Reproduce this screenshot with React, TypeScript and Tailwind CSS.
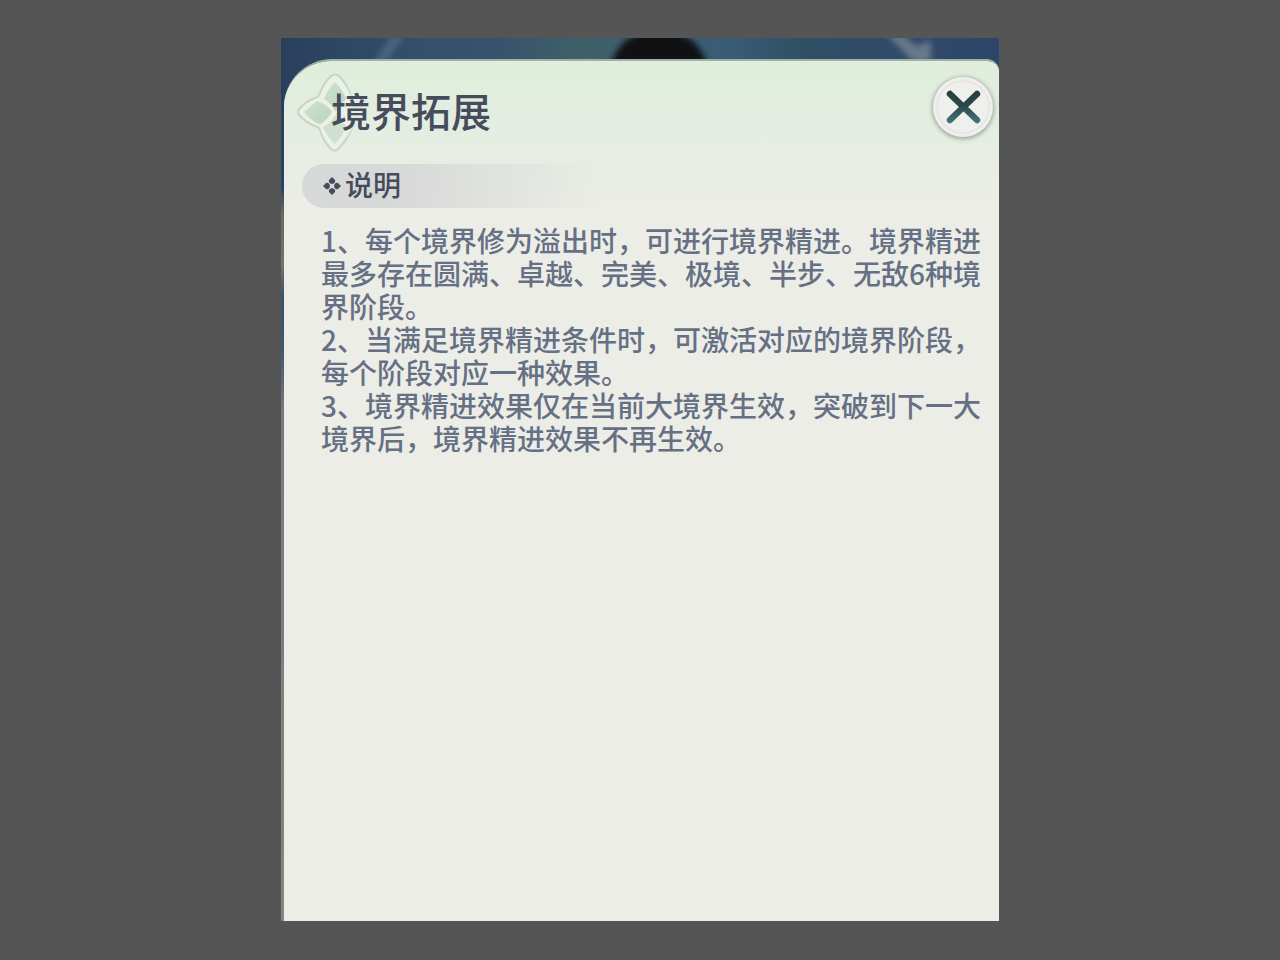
import { useState } from 'react'

const title = '境界拓展'

const rules = [
  '每个境界修为溢出时，可进行境界精进。境界精进最多存在圆满、卓越、完美、极境、半步、无敌6种境界阶段。',
  '当满足境界精进条件时，可激活对应的境界阶段，每个阶段对应一种效果。',
  '境界精进效果仅在当前大境界生效，突破到下一大境界后，境界精进效果不再生效。',
]

function TitleOrnament() {
  return (
    <svg viewBox="0 0 80 80" className="size-20 shrink-0" fill="none" aria-hidden="true">
      <defs>
        <linearGradient id="petal" x1="0" y1="0" x2="1" y2="1">
          <stop offset="0" stopColor="#cfe2cf" />
          <stop offset="1" stopColor="#b9d3be" />
        </linearGradient>
        <linearGradient id="fade" x1="0" y1="0" x2="1" y2="0">
          <stop offset="0.62" stopColor="#fff" />
          <stop offset="0.78" stopColor="#000" />
        </linearGradient>
        <mask id="left-side">
          <rect width="80" height="80" fill="url(#fade)" />
        </mask>
      </defs>
      <g mask="url(#left-side)">
        <path
          d="M2 39Q2 37 5 34Q11 28 19 25Q23 24 24 20Q27 11 35 3Q39 0 43 3Q51 11 55 22L62 40L55 58Q50 68 42 76Q39 79 35 76Q27 68 24 57Q23 54 19 53Q11 50 5 44Q2 41 2 39Z"
          fill="#ebf1e6"
          stroke="#c9d4c6"
          strokeWidth="2"
        />
        <path d="M39 9Q47 17 50 26L39 38Q35 30 28 26Q31 17 39 9Z" fill="url(#petal)" />
        <path d="M8 39L21 28Q30 30 36 39Q30 49 23 51Q14 47 8 39Z" fill="url(#petal)" />
        <path d="M27 54Q36 50 39 42L50 53Q47 63 39 71Q31 64 27 54Z" fill="#cfe0d0" />
      </g>
    </svg>
  )
}

function SectionMark() {
  return (
    <svg viewBox="0 0 18 18" className="size-[18px] shrink-0" fill="#454c5b" aria-hidden="true">
      <path d="M9 0L12 3Q13 6 9 7Q5 6 6 3Z" />
      <path d="M9 18L12 15Q13 12 9 11Q5 12 6 15Z" />
      <path d="M0 9L3 6Q6 5 7 9Q6 13 3 12Z" />
      <path d="M18 9L15 6Q12 5 11 9Q12 13 15 12Z" />
    </svg>
  )
}

function CloseButton({ onClick }: { onClick: () => void }) {
  return (
    <button
      type="button"
      aria-label="关闭"
      onClick={onClick}
      className="flex size-[60px] shrink-0 cursor-pointer items-center justify-center rounded-full bg-[#efefeb] shadow-[0_1px_4px_1px_#9ca69c]"
    >
      <svg viewBox="0 0 60 60" className="size-full" fill="none" aria-hidden="true">
        <defs>
          <linearGradient id="cross" gradientUnits="userSpaceOnUse" x1="0" y1="14" x2="0" y2="46">
            <stop offset="0" stopColor="#293d40" />
            <stop offset="0.45" stopColor="#2b474b" />
            <stop offset="1" stopColor="#42777b" />
          </linearGradient>
        </defs>
        <circle cx="30" cy="30" r="26" stroke="#e6e4e5" strokeWidth="1.5" />
        <path d="M17 17L44 43M44 17L17 43" stroke="url(#cross)" strokeWidth="6.5" strokeLinecap="round" />
      </svg>
    </button>
  )
}

function Scenery() {
  return (
    <svg
      viewBox="0 0 718 883"
      preserveAspectRatio="none"
      className="absolute inset-0 size-full"
      aria-hidden="true"
    >
      <defs>
        <linearGradient id="sky" x1="0" y1="0" x2="1" y2="0">
          <stop offset="0" stopColor="#29405c" />
          <stop offset="0.2" stopColor="#34506a" />
          <stop offset="0.31" stopColor="#38546c" />
          <stop offset="0.42" stopColor="#3f6069" />
          <stop offset="0.62" stopColor="#3a5d76" />
          <stop offset="0.72" stopColor="#305064" />
          <stop offset="0.88" stopColor="#30496a" />
          <stop offset="1" stopColor="#2c4669" />
        </linearGradient>
        <linearGradient id="edge" x1="0" y1="0" x2="0" y2="1">
          <stop offset="0" stopColor="#28405e" />
          <stop offset="0.14" stopColor="#2b4263" />
          <stop offset="0.17" stopColor="#6c6760" />
          <stop offset="0.23" stopColor="#77735c" />
          <stop offset="0.27" stopColor="#38516e" />
          <stop offset="0.33" stopColor="#435770" />
          <stop offset="0.4" stopColor="#77797b" />
          <stop offset="1" stopColor="#858580" />
        </linearGradient>
        <filter
          id="soft"
          x="-20%"
          y="-20%"
          width="140%"
          height="140%"
          colorInterpolationFilters="sRGB"
        >
          <feGaussianBlur stdDeviation="3" />
        </filter>
      </defs>
      <rect width="718" height="883" fill="url(#sky)" />
      <rect y="30" width="4" height="853" fill="url(#edge)" />
      <g filter="url(#soft)">
        <path d="M92 26L112 -4H124L104 26Z" fill="#4a677f" />
        <path d="M328 30Q340 -8 378 -8Q416 -8 428 30Z" fill="#0f1113" />
        <path d="M604 -6H618L636 8L650 2V24H632Z" fill="#68798a" />
      </g>
    </svg>
  )
}

export default function App() {
  const [open, setOpen] = useState(true)

  return (
    <main
      lang="zh-CN"
      className="flex min-h-screen justify-center bg-[#555555] pt-[38px] pb-[39px] font-['Noto_Sans_CJK_SC',sans-serif]"
    >
      <div className="relative flex w-full max-w-[718px] overflow-hidden pt-[21px] pl-[3px]">
        <Scenery />

        {open && (
          <section
            role="dialog"
            aria-labelledby="dialog-title"
            className="relative flex-1 rounded-tl-[48px] rounded-tr-[12px] border-t-2 border-[#9db0aa] bg-[#ecede6] bg-[linear-gradient(#e0eedb,#e3ede0_50px,#e8ede4_104px,#ecede6_150px)] bg-clip-padding"
          >
            <header className="flex items-start justify-between pt-3 pr-[6px] pl-3">
              <div className="flex items-start">
                <TitleOrnament />
                <h1 id="dialog-title" className="-ml-[45px] pt-2 text-[40px] leading-[58px] font-medium text-[#454c5b]">
                  {title}
                </h1>
              </div>
              <div className="pt-1">
                <CloseButton onClick={() => setOpen(false)} />
              </div>
            </header>

            <div className="pt-[11px] pr-3 pl-[18px]">
              <h2 className="flex h-11 max-w-[300px] items-center gap-1 rounded-l-full bg-linear-to-r from-[#d7d8d8] from-30% to-[#d7d8d8]/0 pl-[21px] text-[28px] leading-10 font-medium text-[#454c5b]">
                <SectionMark />
                <span className="pb-1">说明</span>
              </h2>
            </div>

            <ol className="pt-4 pr-[10px] pb-8 pl-[37px] text-[28px] leading-[33px] font-medium text-[#667084]">
              {rules.map((rule, i) => (
                <li key={i}>{`${i + 1}、${rule}`}</li>
              ))}
            </ol>
          </section>
        )}
      </div>
    </main>
  )
}
